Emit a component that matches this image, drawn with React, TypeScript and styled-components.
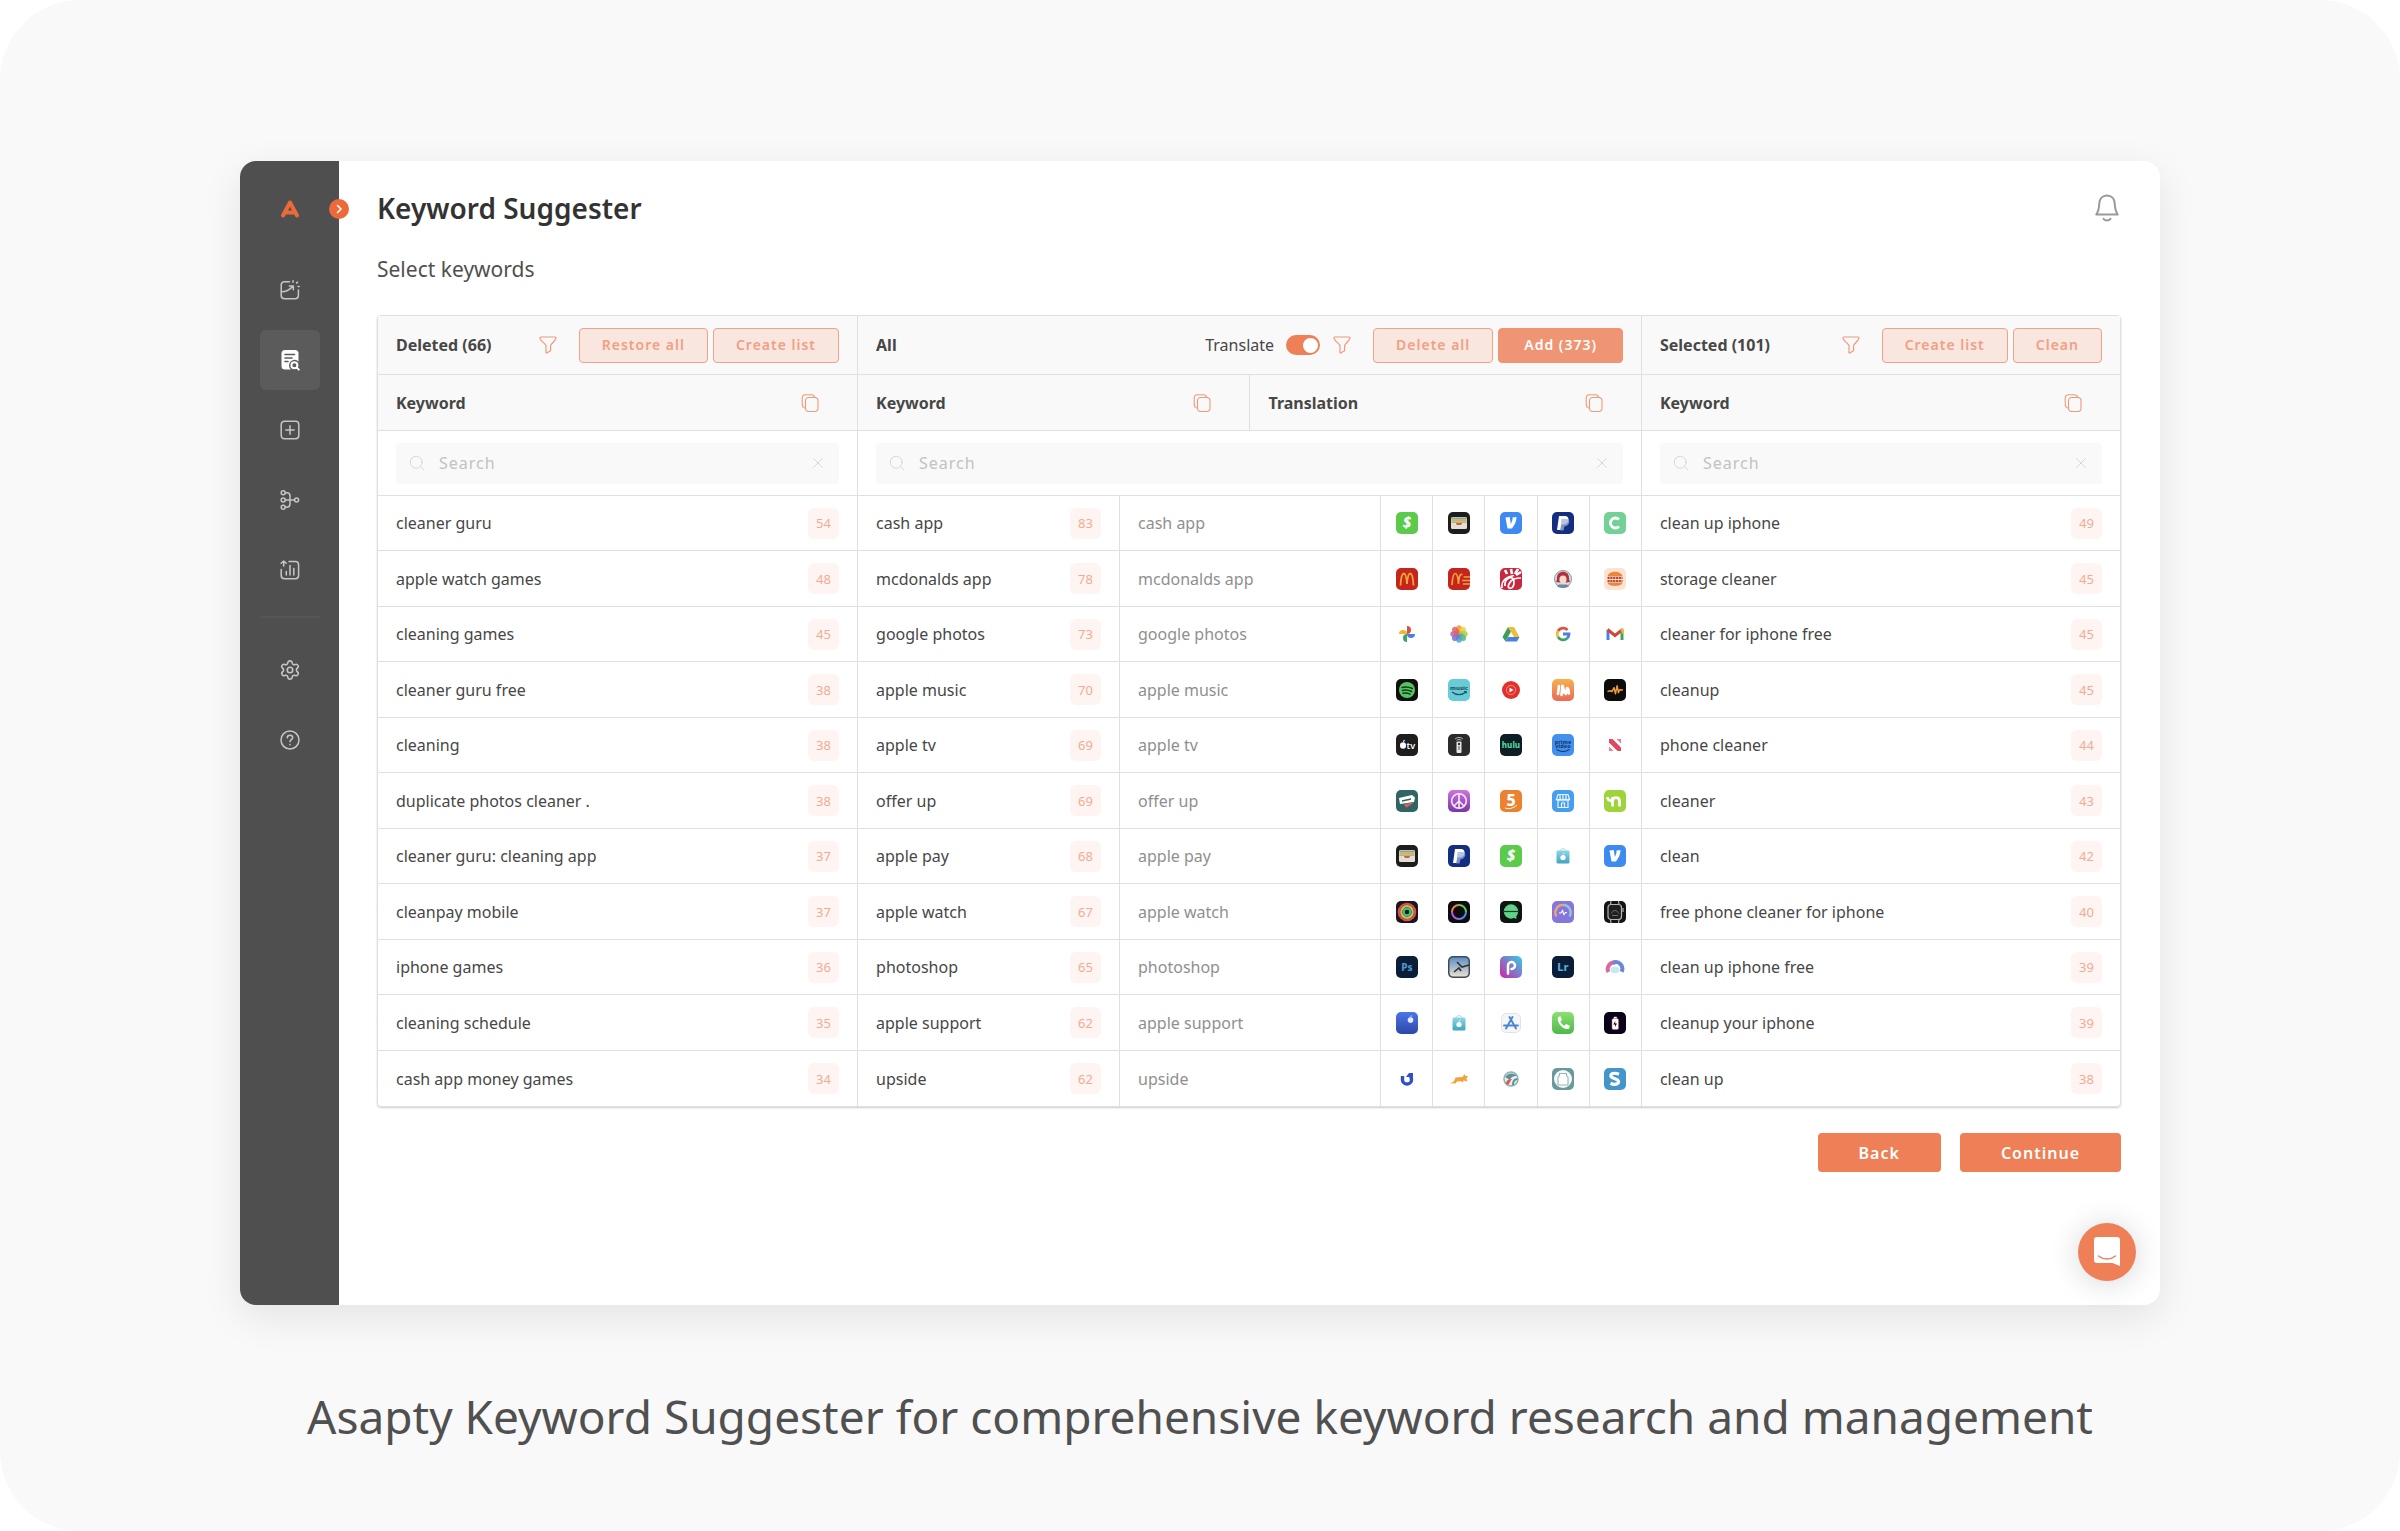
import React from "react";
import styled, { createGlobalStyle, css } from "styled-components";
import { Settings, Search, X } from "lucide-react";

const accent = "#ee7f56";
const line = "#e0e0e0";

const GlobalStyle = createGlobalStyle`
  *, *::before, *::after { box-sizing: border-box; }
  body {
    margin: 0;
    background: #ffffff;
    color: #474747;
    font-family: "Noto Sans", sans-serif;
    font-size: 16px;
    line-height: 24px;
  }
  button, input { font: inherit; }
  h1, h2, p { margin: 0; }
`;

const Page = styled.div`
  min-height: 100vh;
  display: flex;
  flex-direction: column;
  padding: 161px 10% 83px;
  border-radius: 80px;
  background: #f9f9f9;
`;

const Card = styled.div`
  position: relative;
  flex: 1;
  display: flex;
  border-radius: 16px;
  background: #ffffff;
  box-shadow: 0 12px 40px rgba(0, 0, 0, 0.09);
`;

const Caption = styled.p`
  margin-top: 79px;
  font-size: 46px;
  line-height: 64px;
  text-align: center;
  color: #505050;
`;

/* ---------- sidebar ---------- */

const Sidebar = styled.nav`
  position: relative;
  flex: none;
  width: 99px;
  display: flex;
  flex-direction: column;
  align-items: center;
  padding-top: 33px;
  border-radius: 16px 0 0 16px;
  background: #4f4f4f;
`;

const Logo = styled.a`
  display: flex;
  align-items: center;
  height: 30px;
  margin-bottom: 36px;
`;

const NavList = styled.div`
  display: flex;
  flex-direction: column;
  gap: 10px;
`;

const NavLink = styled.a<{ $active?: boolean }>`
  display: flex;
  align-items: center;
  justify-content: center;
  width: 60px;
  height: 60px;
  border-radius: 6px;
  color: ${(p) => (p.$active ? "#ffffff" : "#c6c6c6")};
  background: ${(p) => (p.$active ? "#5b5b5b" : "transparent")};
`;

const NavDivider = styled.hr`
  width: 60px;
  height: 2px;
  margin: 16px 0 22px;
  border: 0;
  background: #565656;
`;

const ExpandButton = styled.button`
  position: absolute;
  top: 38px;
  right: -10px;
  display: flex;
  align-items: center;
  justify-content: center;
  width: 20px;
  height: 20px;
  padding: 0;
  border: 0;
  border-radius: 50%;
  background: #ec6a3a;
`;

/* ---------- content ---------- */

const Content = styled.main`
  flex: 1;
  min-width: 0;
  display: flex;
  flex-direction: column;
  padding: 29px 39px 24px 38px;
`;

const TitleRow = styled.header`
  display: flex;
  align-items: center;
  justify-content: space-between;
  height: 36px;
  padding-right: 2px;
`;

const Title = styled.h1`
  font-size: 28px;
  line-height: 36px;
  font-weight: 600;
  color: #333333;
`;

const BellButton = styled.button`
  display: flex;
  padding: 0;
  border: 0;
  background: none;
`;

const Subtitle = styled.p`
  margin: 28px 0 31px;
  font-size: 21px;
  line-height: 30px;
  color: #505050;
`;

const Panels = styled.div`
  display: grid;
  grid-template-columns: 11fr 18fr 11fr;
  border: 1px solid ${line};
  border-radius: 4px;
  box-shadow: 0 1px 2px rgba(0, 0, 0, 0.2);
`;

const Panel = styled.section`
  min-width: 0;
  & + & {
    border-left: 1px solid ${line};
  }
`;

const Toolbar = styled.div`
  display: flex;
  align-items: center;
  height: 59px;
  padding: 0 18px;
  border-bottom: 1px solid ${line};
  background: #f9f9f9;
`;

const PanelTitle = styled.h2`
  flex: 1;
  font-size: 16px;
  line-height: 24px;
  font-weight: 700;
`;

const IconButton = styled.button`
  display: flex;
  padding: 0;
  border: 0;
  background: none;
  color: #f09a7a;
`;

const Actions = styled.div`
  display: flex;
  gap: 5px;
  margin-left: 22px;
`;

const ActionButton = styled.button<{ $solid?: boolean }>`
  height: 35px;
  padding: 0 22px;
  border: 1px solid #f0a387;
  border-radius: 4px;
  font-size: 14px;
  line-height: 20px;
  font-weight: 600;
  letter-spacing: 1px;
  white-space: nowrap;
  color: #f0a085;
  background: #f8e6df;
  ${(p) =>
    p.$solid &&
    css`
      padding: 0 25px;
      border-color: #f09573;
      color: #ffffff;
      background: #f09573;
    `}
`;

const TranslateLabel = styled.label`
  display: flex;
  align-items: center;
  gap: 12px;
  margin-right: 13px;
`;

const Toggle = styled.input`
  appearance: none;
  display: flex;
  align-items: center;
  justify-content: flex-end;
  width: 34px;
  height: 20px;
  margin: 0;
  padding: 0 2px;
  border-radius: 10px;
  background: ${accent};
  &::before {
    content: "";
    width: 15px;
    height: 15px;
    border-radius: 50%;
    background: #ffffff;
  }
`;

const Table = styled.table`
  width: 100%;
  table-layout: fixed;
  border-collapse: separate;
  border-spacing: 0;
`;

const HeadCell = styled.th`
  height: 56px;
  padding: 0 38px 0 18px;
  border-bottom: 1px solid ${line};
  background: #f9f9f9;
  font-weight: 700;
  text-align: left;
  & + & {
    border-left: 1px solid ${line};
  }
`;

const Spread = styled.div`
  display: flex;
  align-items: center;
  justify-content: space-between;
`;

const SearchCell = styled.td`
  height: 65px;
  padding: 0 18px;
  border-bottom: 1px solid ${line};
`;

const SearchBox = styled.label`
  display: flex;
  align-items: center;
  gap: 13px;
  height: 41px;
  padding: 0 12px 0 12px;
  border-radius: 4px;
  background: #f9f9f9;
  color: #d6d6d6;
`;

const SearchInput = styled.input`
  flex: 1;
  min-width: 0;
  padding: 0;
  border: 0;
  outline: 0;
  background: transparent;
  letter-spacing: 1px;
  &::placeholder {
    color: #c2c2c2;
    opacity: 1;
  }
`;

const Row = styled.tr`
  & > td {
    height: 55px;
    border-bottom: 1px solid ${line};
  }
  &:nth-child(even) > td {
    height: 56px;
  }
  &:last-child > td {
    border-bottom: 0;
  }
`;

const TextCell = styled.td<{ $muted?: boolean }>`
  padding: 0 18px;
  color: ${(p) => (p.$muted ? "#8f8f8f" : "#474747")};
  ${(p) => p.$muted && `border-left: 1px solid ${line};`}
`;

const AppCell = styled.td`
  padding: 0;
  border-left: 1px solid ${line};
  & > svg {
    display: block;
    margin: 0 auto;
  }
`;

const Score = styled.span`
  display: flex;
  align-items: center;
  justify-content: center;
  width: 31px;
  height: 31px;
  border-radius: 6px;
  font-size: 13px;
  line-height: 20px;
  color: #f2ab94;
  background: #fef5f2;
`;

const Footer = styled.div`
  display: flex;
  justify-content: flex-end;
  gap: 19px;
  margin-top: 26px;
`;

const PrimaryButton = styled.button`
  height: 39px;
  padding: 0 41px;
  border: 0;
  border-radius: 4px;
  font-weight: 600;
  letter-spacing: 1px;
  color: #ffffff;
  background: ${accent};
`;

const ChatButton = styled.button`
  position: absolute;
  right: 24px;
  bottom: 24px;
  display: flex;
  align-items: center;
  justify-content: center;
  width: 58px;
  height: 58px;
  padding: 0;
  border: 0;
  border-radius: 50%;
  background: ${accent};
  box-shadow: 0 2px 30px rgba(0, 0, 0, 0.16);
`;

/* ---------- interface icons ---------- */

const Stroke = ({ children, size = 20 }: { children: React.ReactNode; size?: number }) => (
  <svg width={size} height={size} viewBox="0 0 20 20" fill="none" stroke="currentColor" strokeWidth="1.5" strokeLinecap="round" strokeLinejoin="round" aria-hidden="true">
    {children}
  </svg>
);

const InsightIcon = () => (
  <Stroke>
    <path d="M9.5 1.7H4.4a3.2 3.2 0 0 0-3.2 3.2v10.7a3.2 3.2 0 0 0 3.2 3.2h10.8a3.2 3.2 0 0 0 3.2-3.2V10M1.4 11.8c4.600 0 8-1.700 11.400-5.600M9.300 6h4v3.800M13 .8v1.400M17.600 2l-1 1.100M18 6.600h1.200" />
  </Stroke>
);
const ResearchIcon = () => (
  <svg width="20" height="22" viewBox="0 0 20 22" fill="none" aria-hidden="true">
    <rect x="1.500" y="1" width="17" height="19.500" rx="3.500" fill="#fff" />
    <path d="M5 5.500h9.500M5 9h7M5 12.500h3" stroke="#5b5b5b" strokeWidth="1.600" strokeLinecap="round" />
    <circle cx="14.600" cy="16.400" r="5.600" fill="#5b5b5b" />
    <circle cx="14.400" cy="16.200" r="3" stroke="#fff" strokeWidth="2" />
    <path d="M16.800 18.600l2 2" stroke="#fff" strokeWidth="2" strokeLinecap="round" />
  </svg>
);
const AddIcon = () => (
  <Stroke>
    <rect x="1.200" y="1.200" width="17.600" height="17.600" rx="3.200" />
    <path d="M10 5.800v8.400M5.800 10h8.400" />
  </Stroke>
);
const FlowIcon = () => (
  <Stroke>
    <circle cx="3.200" cy="2.800" r="2" />
    <circle cx="3.200" cy="10" r="2" />
    <circle cx="3.200" cy="17.200" r="2" />
    <circle cx="16.600" cy="10" r="2" />
    <path d="M5.200 10h9.400M5.200 2.800h1.600c2 0 3.200 1.200 3.200 3.200v8c0 2-1.200 3.200-3.200 3.200H5.200" />
  </Stroke>
);
const ReportIcon = () => (
  <Stroke>
    <path d="M9 1.500h6.400a3.200 3.200 0 0 1 3.200 3.200v10.800a3.200 3.200 0 0 1-3.200 3.200H4.400a3.200 3.200 0 0 1-3.200-3.200V9.500M3.700 6V1M1.200 3.300L3.700 1l2.500 2.300M6.300 11.500v3.500M10 5.500V15M13.800 8.500V15" />
  </Stroke>
);
const HelpIcon = () => (
  <Stroke>
    <circle cx="10" cy="10" r="9" />
    <path d="M7.300 7.800c0-3.400 5.400-3.400 5.400 0 0 1.900-2.700 1.900-2.700 3.900M10 14.600v.1" />
  </Stroke>
);
const LogoMark = () => (
  <svg width="20" height="20" viewBox="0 0 20 20" fill="none" aria-hidden="true">
    <path d="M3 16.500L10 3.500l7 13M6.500 13.500h7" stroke="#ec6a3a" strokeWidth="4" strokeLinecap="round" strokeLinejoin="round" />
  </svg>
);
const BellIcon = () => (
  <svg width="24" height="28" viewBox="0 0 24 28" fill="none" stroke="#999" strokeWidth="2" strokeLinejoin="round" strokeLinecap="round" aria-hidden="true">
    <path d="M12 1.500c-4.500 0-7.500 3.300-7.700 7.800-.2 5-.8 8-3 11.200h21.400c-2.200-3.200-2.800-6.200-3-11.200C19.500 4.800 16.500 1.500 12 1.500z" />
    <path d="M8.500 24.800c1.800 2.200 5.200 2.200 7 0" />
  </svg>
);
const FilterIcon = () => (
  <svg width="18" height="18" viewBox="0 0 18 18" fill="none" stroke="currentColor" strokeWidth="1.200" strokeLinejoin="round" aria-hidden="true">
    <path d="M1.800 1h14.400c.5 0 .8.500.8.900 0 2.400-4.200 5-5.400 7.500v5.300L7.700 17c-.4.200-.7 0-.7-.4V9.400C5.600 6.900 1 4.400 1 1.900 1 1.400 1.300 1 1.800 1z" />
  </svg>
);
const CopyIcon = () => (
  <svg width="18" height="18" viewBox="0 0 18 18" fill="none" stroke="currentColor" strokeWidth="1.100" strokeLinecap="round" aria-hidden="true">
    <rect x="4.500" y="3.500" width="12.500" height="14" rx="3.200" />
    <path d="M4.300 14.200C2 13.600 1.200 12.600 1.200 10.500V4.200C1.200 2 2.400.8 4.600.8h5.600c1.900 0 3.200.7 3.600 2.600" />
  </svg>
);
const ChatIcon = () => (
  <svg width="26" height="30" viewBox="0 0 26 30" aria-hidden="true">
    <path d="M3 0h20a3 3 0 0 1 3 3v26l-7.500-3H3a3 3 0 0 1-3-3V3a3 3 0 0 1 3-3z" fill="#fff" />
    <path d="M4.500 19c5 4 12 4 17 0" fill="none" stroke={accent} strokeWidth="1.500" strokeLinecap="round" />
  </svg>
);

/* ---------- store app icons ---------- */

const Tile = ({ fill }: { fill: string }) => <rect width="22" height="22" rx="5" fill={fill} />;

const Mark = ({ children, size = 14, fill = "#fff", y = 16, style = "normal" }: { children: string; size?: number; fill?: string; y?: number; style?: string }) => (
  <text x="11" y={y} textAnchor="middle" fontSize={size} fontWeight="800" fontStyle={style} fill={fill} fontFamily="'Noto Sans', sans-serif">
    {children}
  </text>
);

const petals = ["#f39a32", "#f2cf3c", "#a8cf4a", "#53b77d", "#4aa3d8", "#6f76c8", "#b267b5", "#e4605a"];

const art: Record<string, React.ReactNode> = {
  cash: <><Tile fill="#5acb4b" /><Mark size={15} style="italic">$</Mark></>,
  wallet: (
    <>
      <Tile fill="#1d1d1d" />
      <rect x="3" y="5" width="16" height="12" rx="1.500" fill="#e3dfd6" />
      <path d="M3.500 5.500h15v2h-15z" fill="#7fa9a4" /><path d="M3.500 7.500h15v2h-15z" fill="#e0ad50" />
      <path d="M3.500 9.500h15V11h-4.500a3 2 0 0 1-6 0H3.500z" fill="#b0b878" /><path d="M8 11h6a3 2 0 0 1-6 0z" fill="#c9614c" />
    </>
  ),
  venmo: <><Tile fill="#3f8af0" /><path d="M5.500 5.500l2 11h4.500c2.500-3.500 4.500-7 4.500-11.500l-4 .6c.2 2.600-.7 4.700-1.700 6.500l-1-7z" fill="#fff" /></>,
  paypal: <><Tile fill="#142f80" /><path d="M7 4h6c5 0 5 8-1 8.500H9.500L8.500 18H5z" fill="#fff" /><path d="M9.500 7h5.500c4 1 2.500 7-2.500 7.300L11.500 18.500H8.300z" fill="#9fb2dc" opacity=".75" /></>,
  chime: <><Tile fill="#72d196" /><path d="M15 7.500a5 5 0 1 0 0 7" fill="none" stroke="#fff" strokeWidth="2.800" /></>,
  mcd: <><Tile fill="#c4261d" /><path d="M4.500 17.500C5 9 6 5.500 7.800 5.500S10.500 9 11 16c.500-7 1.400-10.500 3.200-10.500S17 9 17.500 17.500" fill="none" stroke="#f3a43a" strokeWidth="1.800" /></>,
  mcd2: <><Tile fill="#c4261d" /><path d="M4 17C4.500 9 5.500 5.500 7.300 5.500S10 9 10.500 16c.500-7 1.200-10.500 4-9.500M15.500 9H22M14 12.500h8M15 16h7" fill="none" stroke="#f0a040" strokeWidth="1.700" /></>,
  chick: <><Tile fill="#c7283f" /><path d="M2 20C1 12 6 9 14 7.500M5 18c-1-8 9-12 9-4s-8 8-5 2 8-6 12-6" fill="none" stroke="#fff" strokeWidth="1.700" /><path d="M5 2l2 4M11 1l1 5M18 1c-1 2-2 3-3 5M21 4l-5 3" stroke="#fff" strokeWidth="2.600" /></>,
  wendy: <><circle cx="11" cy="11" r="8.500" fill="#d5dfe1" stroke="#8b9a9d" /><path d="M5 10c-.5-8.500 12.500-8.500 12 0 0 1.500.5 3 1 4-5 1-9 1-14 0 .5-1 1-2.500 1-4z" fill="#b3303a" /><ellipse cx="11" cy="11.500" rx="3.600" ry="4" fill="#f3d9cf" /><path d="M7 16.500h8l2 2c-3 1.800-9 1.800-12 0z" fill="#72869a" /></>,
  bk: <><Tile fill="#fbe5d0" /><path d="M3.500 8.500C4 2 18 2 18.500 8.500z" fill="#ee8440" /><path d="M3.500 14.500h15c0 4.500-15 4.500-15 0z" fill="#ee8440" /><path d="M3.500 10h15M3.500 13h15" stroke="#b9483a" strokeWidth="2.200" strokeDasharray="2.200 .6" /></>,
  gphotos: <><path d="M11 3a4 4 0 0 1 0 8z" fill="#dd5145" /><path d="M19 11a4 4 0 0 1-8 0z" fill="#4b7fe0" /><path d="M11 19a4 4 0 0 1 0-8z" fill="#41a35d" /><path d="M3 11a4 4 0 0 1 8 0z" fill="#edb93c" /></>,
  photos: <>{petals.map((c, i) => <ellipse key={c} cx="11" cy="6.500" rx="3.100" ry="4.300" fill={c} opacity=".85" transform={`rotate(${i * 45} 11 11)`} />)}</>,
  drive: <><path d="M8 4L2.500 14l3 4.500L11 8.500z" fill="#3f9d58" /><path d="M8 4h6l5.500 10H14z" fill="#efbd3c" /><path d="M5.500 18.500L8 14h11.500l-2.500 4.500z" fill="#4b7fe0" /></>,
  google: <g fill="none" strokeWidth="2.800"><path d="M15.500 7A6 6 0 0 0 6 8" stroke="#dd5145" /><path d="M6 8a6 6 0 0 0 0 6" stroke="#efbd3c" /><path d="M6 14a6 6 0 0 0 9 1.500" stroke="#41a35d" /><path d="M15 15.500a6 6 0 0 0 2-4.500h-6" stroke="#4b7fe0" /></g>,
  gmail: <g fill="none" strokeWidth="3"><path d="M4 17V7" stroke="#4b7fe0" /><path d="M18 17V7" stroke="#41a35d" /><path d="M3.500 6.500l7.500 6 7.500-6" stroke="#d2463b" /><path d="M16.700 7.500l2-1v4" stroke="#efbd3c" strokeWidth="2" /></g>,
  spotify: <><Tile fill="#111" /><circle cx="11" cy="11" r="8" fill="#55c463" /><path d="M6 8.500c4-1 7-.6 10.500 1M6.500 11.500c3-.8 6-.5 9 1M7 14.300c2.500-.6 5-.3 7 .8" fill="none" stroke="#153a1b" strokeWidth="1.500" strokeLinecap="round" /></>,
  amusic: <><Tile fill="#68cbd6" /><Mark size={6} fill="#1f5661" y={11}>music</Mark><path d="M4 13c4 3.500 10 3.500 14 0M16 12.500h2.200v2" fill="none" stroke="#1f5661" strokeWidth="1.200" /></>,
  ytmusic: <><circle cx="11" cy="11" r="9" fill="#e5302a" /><circle cx="11" cy="11" r="4.600" fill="none" stroke="#f5a5a1" strokeWidth=".8" /><path d="M9.500 8.500l4 2.500-4 2.500z" fill="#fff" /></>,
  musi: <><Tile fill="url(#warm)" /><path d="M6 15l1-8M9.500 16l1-10 2 8M14 15l1-6M17 14.500l-1-5" stroke="#fff" strokeWidth="2.600" strokeLinecap="round" fill="none" /></>,
  audiomack: <><Tile fill="#0c0c0c" /><path d="M3.500 12.500l3-.8 1.500 1 2-4 1.500 6 1.600-8 1.300 7 1.200-3 3.400.3" fill="none" stroke="#ee9a36" strokeWidth="1.500" strokeLinejoin="round" /></>,
  appletv: <><Tile fill="#1e1e1e" /><ellipse cx="7" cy="11.500" rx="3" ry="3.200" fill="#fff" /><path d="M7 8c0-1.500.8-2 1.800-2.200C8.800 7.300 8.200 8 7 8z" fill="#fff" /><text x="10.500" y="15" fontSize="9" fontWeight="600" fill="#fff" fontFamily="'Noto Sans', sans-serif">tv</text></>,
  remote: <><Tile fill="#2b2b2b" /><rect x="8.500" y="7.500" width="5" height="11.500" rx="1" fill="#e8e8e8" /><circle cx="11" cy="10" r="1.200" fill="#333" /><path d="M10 13h2M10 15h2" stroke="#555" /><path d="M7 5c2-2 6-2 8 0M8.500 6.300c1.500-1 3.500-1 5 0" fill="none" stroke="#bbb" /></>,
  hulu: <><Tile fill="#0d1f22" /><Mark size={8} fill="#55d3a0" y={14}>hulu</Mark></>,
  prime: <><Tile fill="#4390ee" /><Mark size={5.500} fill="#173d74" y={9.500}>prime</Mark><Mark size={5.500} fill="#173d74" y={14}>video</Mark><path d="M4.500 15.500c4 2.500 9 2.500 13 0" fill="none" stroke="#173d74" strokeWidth="1.200" /></>,
  news: <><path d="M5 5h3.500L17 13.500V17h-3.500L5 8.500z" fill="#e0485f" /><path d="M12.500 5H17v4.500zM5 12.500L9.500 17H5z" fill="#ea8090" /></>,
  offerup: <><Tile fill="#2f6664" /><path d="M3 8l13-3 3 2.500-1 4.500-14 2z" fill="#fff" /><path d="M8 14l10-1.500-7 5-2-1z" fill="#de5b5b" /><path d="M6 11l9-2" stroke="#2f6664" strokeWidth="1.300" /></>,
  peace: <><Tile fill="url(#violet)" /><g fill="none" stroke="#f7e8fb" strokeWidth="1.600"><circle cx="11" cy="11" r="7.300" /><path d="M11 3.700v14.600M11 11l-5.200 5.200M11 11l5.200 5.200" /></g></>,
  five: <><Tile fill="#ea8230" /><Mark size={16} y={16}>5</Mark><path d="M5 18c4 1.500 9 0 12-3" stroke="#fff" fill="none" /></>,
  shop: <><Tile fill="#469eec" /><g fill="none" stroke="#e6f3fd" strokeWidth="1.200"><path d="M6 4.500h10l1.500 5h-13zM6 9.500v8h10v-8M9.500 17v-4h3v4M8 4.500V9M11 4.500V9M14 4.500V9M4.500 9.500c1 2 3 2 4.300 0 1 2 3.400 2 4.400 0 1 2 3.300 2 4.300 0" /></g></>,
  nextdoor: <><Tile fill="#9fd33c" /><path d="M3.500 7c0 3 1.500 3.800 4 3.800M8.500 16.500V7M8.500 11c0-4.500 7-4.500 7 0v5.500" fill="none" stroke="#fff" strokeWidth="2.700" /></>,
  store: <><path d="M8 6c0-3 6-3 6 0" fill="none" stroke="#a9dbe6" /><rect x="4.500" y="5.500" width="13" height="13" rx="1.500" fill="url(#teal)" /><circle cx="11" cy="12.500" r="2.600" fill="#fff" /><path d="M11 9.500c0-1 .6-1.600 1.400-1.800 0 1-.4 1.700-1.400 1.800z" fill="#fff" /></>,
  rings: <><Tile fill="#1c1616" /><g fill="none" strokeWidth="2.200"><circle cx="11" cy="11" r="8.200" stroke="#d94b5e" /><circle cx="11" cy="11" r="5.800" stroke="#c8c44a" /><circle cx="11" cy="11" r="3.400" stroke="#43c08a" /></g></>,
  halo: <><Tile fill="#0b0b10" /><g fill="none" strokeWidth="2"><path d="M11 4a7 7 0 0 1 7 7" stroke="#5fc75a" /><path d="M18 11a7 7 0 0 1-7 7" stroke="#4a90e2" /><path d="M11 18a7 7 0 0 1-7-7" stroke="#b05be0" /><path d="M4 11a7 7 0 0 1 7-7" stroke="#e8804a" /></g></>,
  chat: <><Tile fill="#0f1511" /><circle cx="11" cy="10.500" r="7.200" fill="#5fd38a" /><path d="M12 16l4.500 2-.5-5z" fill="#5fd38a" /><path d="M4 10.500h14" stroke="#143a22" strokeWidth="1.200" /></>,
  gauge: <><Tile fill="#8377df" /><path d="M4.500 15.500A7.500 7.500 0 0 1 11 4" fill="none" stroke="#f0a36e" strokeWidth="2.400" /><path d="M11 4a7.500 7.500 0 0 1 6.500 11.500" fill="none" stroke="#9cc3c4" strokeWidth="2.400" /><path d="M7 12h2l1.500-2.500 1.500 4 1.500-2H15" fill="none" stroke="#fff" strokeWidth="1.200" /></>,
  watch: <><Tile fill="#141414" /><rect x="4" y="3.500" width="13.500" height="15" rx="3" fill="#1f1f1f" stroke="#b5b5b5" strokeWidth="1.200" /><path d="M6.500 3.500L7 0M15 3.500L14.500 0M6.500 18.500L7 22M15 18.500l-.5 3.500M19 7v4" stroke="#b5b5b5" strokeWidth="1.200" /><path d="M7.500 12.500c1-4 6-4 7 0M8 14.500h6" stroke="#6c6c6c" fill="none" /></>,
  ps: <><Tile fill="#0b1e35" /><Mark size={10} fill="#4a93d6" y={14.600}>Ps</Mark></>,
  plane: <><Tile fill="#3f4a57" /><rect x="1.500" y="1.500" width="19" height="19" rx="4" fill="url(#sky)" /><path d="M6 16l5-4 2 3M9 6l5 5 7-2" stroke="#2e3338" strokeWidth="1.600" fill="none" /></>,
  picsart: <><Tile fill="url(#pics)" /><path d="M8 17.500V9.500a3.500 3.500 0 1 1 3.500 3.500" fill="none" stroke="#fff" strokeWidth="2.500" strokeLinecap="round" /></>,
  lr: <><Tile fill="#0b1e35" /><Mark size={11} fill="#5aa7dc" y={15}>Lr</Mark></>,
  arch: <><path d="M4.500 16a6.500 6.500 0 0 1 6.500-9.500" fill="none" stroke="#d96a9b" strokeWidth="4" /><path d="M9 6.800a6.500 6.500 0 0 1 8.500 9" fill="none" stroke="#6a86d6" strokeWidth="4" /><ellipse cx="11" cy="14" rx="4.500" ry="3.200" fill="#c5e9f2" /></>,
  support: <><Tile fill="url(#royal)" /><circle cx="14.500" cy="8" r="2.800" fill="#e6ecfb" /><path d="M14.500 5c0-1 .5-1.500 1.300-1.700 0 1-.4 1.600-1.300 1.700z" fill="#e6ecfb" /></>,
  appstore: <><rect x="1.500" y="1.500" width="19" height="19" rx="5" fill="#f4f6f8" stroke="#dfe3e7" /><path d="M12.500 5L6 16.500M9.500 5l6.500 11.500M4 13.500h14" stroke="#4a86cf" strokeWidth="1.900" strokeLinecap="round" /></>,
  phone: <><Tile fill="url(#leaf)" /><path d="M6 5l2.500-.8L10 8 8.300 9.500c1 2 2.500 3.300 4.200 4.200L14 12l4 1.800-1 3c-6 1.700-12.500-6-11-11.800z" fill="#fff" /></>,
  battery: <><Tile fill="#070318" /><rect x="8" y="6.500" width="6.500" height="11" rx="1.500" fill="#fff" stroke="#e5536f" strokeWidth=".5" /><rect x="9.800" y="4.800" width="3" height="1.500" fill="#fff" /><path d="M11.300 9l-2 3.500h1.800L11 15l2-3.500h-1.800z" fill="#070318" /></>,
  upside: <><path d="M6.500 8v4a4.500 4 0 0 0 9 0c0-1.500-.3-2.500-1-3.500" fill="none" stroke="#2f50c8" strokeWidth="3.400" /><path d="M10 9l3-4h4v4z" fill="#2f50c8" /></>,
  fox: <path d="M2 16l4-3 1.500-3.500 7-.5 2-3 1 2h2.500l-1.500 2.500 1 3-4-1-.5 2-2-1.300-4 .3-2 2.500-1-1z" fill="#f0a53c" />,
  globe: <><circle cx="11" cy="11" r="7" fill="#e6efef" stroke="#8fb0b2" strokeWidth="1.500" /><path d="M5 9c4-5 9-4 12-1-4 0-6 1-7 4z" fill="#5f8f98" /><path d="M6 16c0-4 3-5 6-5-2 2-2 4-4 6z" fill="#e05a4c" /><path d="M13 17c0-4 2-6 4.500-6" stroke="#5f8f98" strokeWidth="2" fill="none" /></>,
  jar: <><Tile fill="#6b989a" /><circle cx="11" cy="11" r="9" fill="#f4f8f8" /><path d="M7.500 5.500h7v2l1.500 2v7.500H6V9.500l1.500-2z" fill="#fff" stroke="#9bb5b6" strokeWidth="1.100" /></>,
  simple: <><Tile fill="#4496ca" /><path d="M15 6.300C9.500 4 6.500 6 7 8.300c.5 2.200 7 2.200 7.500 5 .4 3-4 4-8 2" fill="none" stroke="#fff" strokeWidth="3.200" /></>,
};

const Gradient = ({ id, from, to, slant }: { id: string; from: string; to: string; slant?: boolean }) => (
  <linearGradient id={id} x1={slant ? "1" : "0"} y1="0" x2="0" y2="1">
    <stop offset="0" stopColor={from} />
    <stop offset="1" stopColor={to} />
  </linearGradient>
);

const GradientDefs = styled.svg`
  position: absolute;
  width: 0;
  height: 0;
`;

const AppIcon = ({ name }: { name: string }) => (
  <svg width="22" height="22" viewBox="0 0 22 22" role="img" aria-label={name}>
    {art[name]}
  </svg>
);

/* ---------- data ---------- */

const deleted: [string, number][] = [
  ["cleaner guru", 54],
  ["apple watch games", 48],
  ["cleaning games", 45],
  ["cleaner guru free", 38],
  ["cleaning", 38],
  ["duplicate photos cleaner .", 38],
  ["cleaner guru: cleaning app", 37],
  ["cleanpay mobile", 37],
  ["iphone games", 36],
  ["cleaning schedule", 35],
  ["cash app money games", 34],
];

const all: [string, number, string][] = [
  ["cash app", 83, "cash wallet venmo paypal chime"],
  ["mcdonalds app", 78, "mcd mcd2 chick wendy bk"],
  ["google photos", 73, "gphotos photos drive google gmail"],
  ["apple music", 70, "spotify amusic ytmusic musi audiomack"],
  ["apple tv", 69, "appletv remote hulu prime news"],
  ["offer up", 69, "offerup peace five shop nextdoor"],
  ["apple pay", 68, "wallet paypal cash store venmo"],
  ["apple watch", 67, "rings halo chat gauge watch"],
  ["photoshop", 65, "ps plane picsart lr arch"],
  ["apple support", 62, "support store appstore phone battery"],
  ["upside", 62, "upside fox globe jar simple"],
];

const selected: [string, number][] = [
  ["clean up iphone", 49],
  ["storage cleaner", 45],
  ["cleaner for iphone free", 45],
  ["cleanup", 45],
  ["phone cleaner", 44],
  ["cleaner", 43],
  ["clean", 42],
  ["free phone cleaner for iphone", 40],
  ["clean up iphone free", 39],
  ["cleanup your iphone", 39],
  ["clean up", 38],
];

/* ---------- parts ---------- */

const FilterButton = () => (
  <IconButton type="button" aria-label="Filter">
    <FilterIcon />
  </IconButton>
);

const ColumnHead = ({ title, span }: { title: string; span?: number }) => (
  <HeadCell scope="col" colSpan={span}>
    <Spread>
      {title}
      <IconButton type="button" aria-label={`Copy ${title}`}>
        <CopyIcon />
      </IconButton>
    </Spread>
  </HeadCell>
);

const SearchRow = ({ span, label }: { span?: number; label: string }) => (
  <tr>
    <SearchCell colSpan={span}>
      <SearchBox>
        <Search size={18} strokeWidth={1.3} aria-hidden="true" />
        <SearchInput type="text" placeholder="Search" aria-label={label} />
        <X size={18} strokeWidth={1.3} aria-hidden="true" />
      </SearchBox>
    </SearchCell>
  </tr>
);

const KeywordCell = ({ text, score }: { text: string; score: number }) => (
  <TextCell>
    <Spread>
      {text}
      <Score>{score}</Score>
    </Spread>
  </TextCell>
);

const KeywordTable = ({ rows, label }: { rows: [string, number][]; label: string }) => (
  <Table>
    <thead>
      <tr>
        <ColumnHead title="Keyword" />
      </tr>
      <SearchRow label={label} />
    </thead>
    <tbody>
      {rows.map(([text, score]) => (
        <Row key={text}>
          <KeywordCell text={text} score={score} />
        </Row>
      ))}
    </tbody>
  </Table>
);

const Column = styled.col<{ $share: number }>`
  width: ${(p) => 100 / p.$share}%;
`;

export default function App() {
  return (
    <>
      <GlobalStyle />
      <GradientDefs aria-hidden="true">
        <defs>
          <Gradient id="warm" from="#f6b04e" to="#ea6a58" />
          <Gradient id="violet" from="#cf74dc" to="#7b35a8" />
          <Gradient id="teal" from="#8fd6e6" to="#3fa6bf" />
          <Gradient id="sky" from="#5f8fc4" to="#e8e0d0" />
          <Gradient id="pics" from="#2fd0e8" to="#d420a8" slant />
          <Gradient id="royal" from="#4a76ea" to="#2f47a5" />
          <Gradient id="leaf" from="#8be071" to="#4fb84a" />
        </defs>
      </GradientDefs>
      <Page>
        <Card>
          <Sidebar aria-label="Main">
            <Logo href="#" aria-label="Asapty home"><LogoMark /></Logo>
            <ExpandButton type="button" aria-label="Expand menu">
              <svg width="8" height="10" viewBox="0 0 8 10" fill="none" stroke="#fff" strokeWidth="1.600" strokeLinecap="round" strokeLinejoin="round">
                <path d="M2.500 1.500L6 5 2.500 8.500" />
              </svg>
            </ExpandButton>
            <NavList>
              <NavLink href="#" aria-label="Insights"><InsightIcon /></NavLink>
              <NavLink href="#" aria-label="Keyword research" $active><ResearchIcon /></NavLink>
              <NavLink href="#" aria-label="Create"><AddIcon /></NavLink>
              <NavLink href="#" aria-label="Automations"><FlowIcon /></NavLink>
              <NavLink href="#" aria-label="Reports"><ReportIcon /></NavLink>
            </NavList>
            <NavDivider />
            <NavList>
              <NavLink href="#" aria-label="Settings"><Settings size={22} strokeWidth={1.7} /></NavLink>
              <NavLink href="#" aria-label="Help"><HelpIcon /></NavLink>
            </NavList>
          </Sidebar>

          <Content>
            <TitleRow>
              <Title>Keyword Suggester</Title>
              <BellButton type="button" aria-label="Notifications"><BellIcon /></BellButton>
            </TitleRow>
            <Subtitle>Select keywords</Subtitle>

            <Panels>
              <Panel>
                <Toolbar>
                  <PanelTitle>Deleted (66)</PanelTitle>
                  <FilterButton />
                  <Actions>
                    <ActionButton type="button">Restore all</ActionButton>
                    <ActionButton type="button">Create list</ActionButton>
                  </Actions>
                </Toolbar>
                <KeywordTable rows={deleted} label="Search deleted keywords" />
              </Panel>

              <Panel>
                <Toolbar>
                  <PanelTitle>All</PanelTitle>
                  <TranslateLabel>
                    Translate
                    <Toggle type="checkbox" role="switch" defaultChecked />
                  </TranslateLabel>
                  <FilterButton />
                  <Actions>
                    <ActionButton type="button">Delete all</ActionButton>
                    <ActionButton type="button" $solid>Add (373)</ActionButton>
                  </Actions>
                </Toolbar>
                <Table>
                  <colgroup>
                    <Column $share={3} />
                    <Column $share={6} />
                    <Column $share={6} />
                    {[1, 2, 3, 4, 5].map((n) => <Column key={n} $share={15} />)}
                  </colgroup>
                  <thead>
                    <tr>
                      <ColumnHead title="Keyword" span={2} />
                      <ColumnHead title="Translation" span={6} />
                    </tr>
                    <SearchRow span={8} label="Search all keywords" />
                  </thead>
                  <tbody>
                    {all.map(([text, score, apps]) => (
                      <Row key={text}>
                        <KeywordCell text={text} score={score} />
                        <TextCell $muted colSpan={2}>{text}</TextCell>
                        {apps.split(" ").map((name) => (
                          <AppCell key={name}><AppIcon name={name} /></AppCell>
                        ))}
                      </Row>
                    ))}
                  </tbody>
                </Table>
              </Panel>

              <Panel>
                <Toolbar>
                  <PanelTitle>Selected (101)</PanelTitle>
                  <FilterButton />
                  <Actions>
                    <ActionButton type="button">Create list</ActionButton>
                    <ActionButton type="button">Clean</ActionButton>
                  </Actions>
                </Toolbar>
                <KeywordTable rows={selected} label="Search selected keywords" />
              </Panel>
            </Panels>

            <Footer>
              <PrimaryButton type="button">Back</PrimaryButton>
              <PrimaryButton type="button">Continue</PrimaryButton>
            </Footer>
          </Content>

          <ChatButton type="button" aria-label="Open chat"><ChatIcon /></ChatButton>
        </Card>
        <Caption>Asapty Keyword Suggester for comprehensive keyword research and management</Caption>
      </Page>
    </>
  );
}
